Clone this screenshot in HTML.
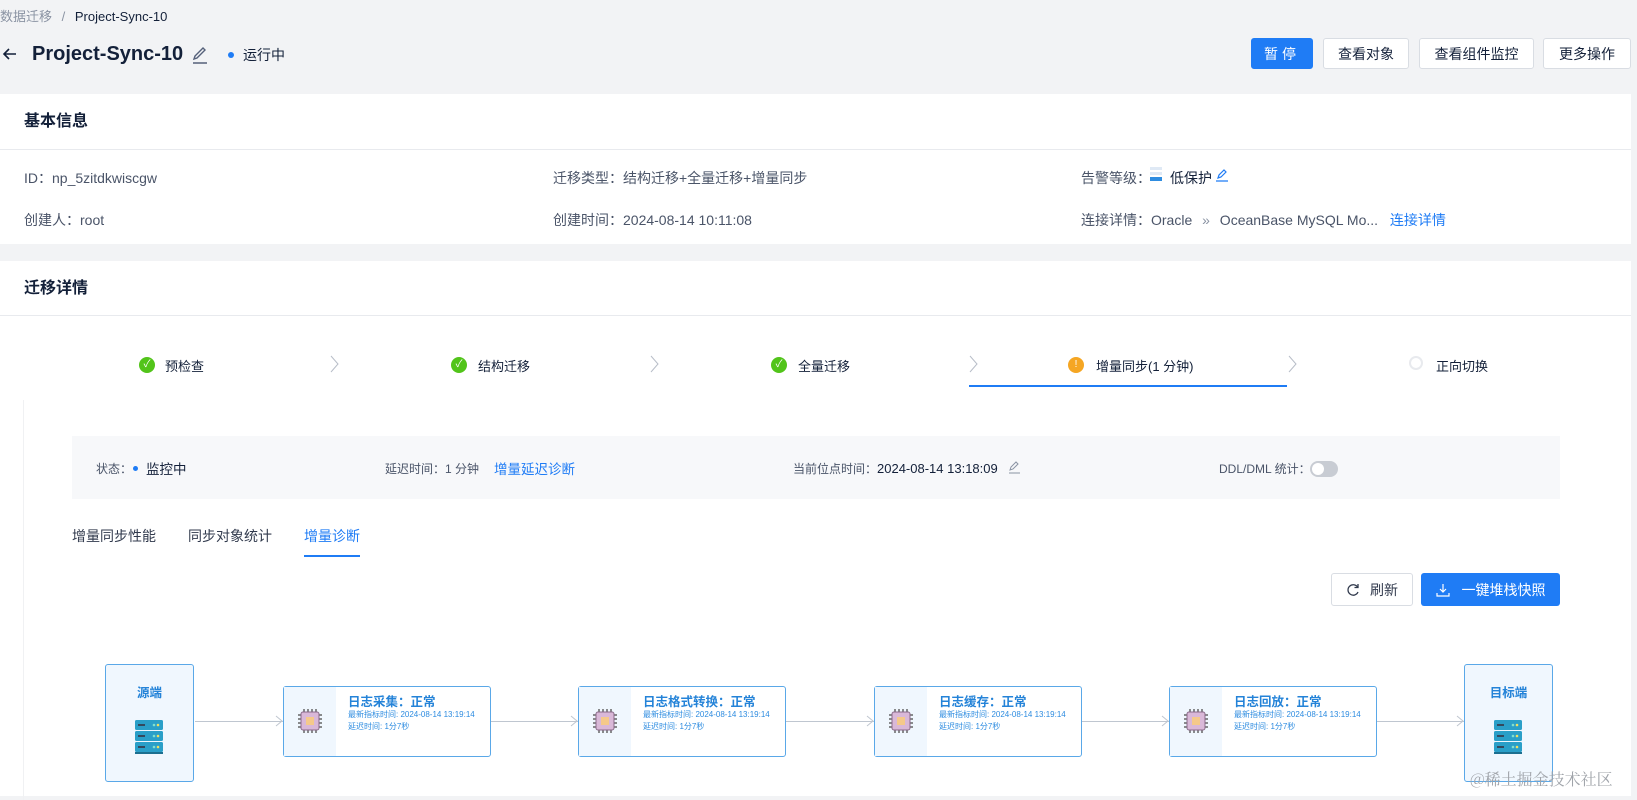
<!DOCTYPE html>
<html><head><meta charset="utf-8">
<style>
*{box-sizing:border-box;margin:0;padding:0}
body{width:1637px;height:796px;overflow:hidden;background:#f2f3f5;font-family:"Liberation Sans","Noto Sans CJK SC",sans-serif;color:#132039;position:relative;font-size:14px}
.a{position:absolute;white-space:nowrap}
.card{position:absolute;left:0;width:1631px;background:#fff}
.btn{position:absolute;top:38px;height:31px;border:1px solid #d9dde3;background:#fff;border-radius:3px;font-size:14px;display:flex;align-items:center;justify-content:center;color:#132039}
.chev{position:absolute;top:355px;width:10px;height:18px}
.ok{position:absolute;top:357px;width:16px;height:16px;border-radius:50%;background:#52c41a;color:#fff;font-size:10px;text-align:center;line-height:16px}
.stage{position:absolute;top:686px;height:71px;border:1.5px solid #5aa8e8;border-radius:3px;background:#fff}
.stage .ic{position:absolute;left:0;top:0;bottom:0;width:52px;background:#f0f7fe}
.stage .t{position:absolute;left:64px;top:4px;font-size:12.5px;font-weight:bold;color:#2483d8}
.stage .s{position:absolute;left:64px;font-size:8px;color:#2e8ce0}
.box{position:absolute;top:664px;width:89px;height:118px;border:1.5px solid #5aa8e8;border-radius:3px;background:#f0f7fe}
.box .t{position:absolute;top:17px;left:0;right:0;text-align:center;font-size:12.5px;font-weight:bold;color:#2483d8}
.line{position:absolute;top:721px;height:1px;background:#bfc6d0}
</style></head><body>
<div class="a" style="left:0;top:6px;font-size:13px;color:#8a93a3">数据迁移 <span style="margin:0 6px">/</span> <span style="color:#132039">Project-Sync-10</span></div>
<svg class="a" style="left:2px;top:46px" width="16" height="16" viewBox="0 0 16 16"><path d="M14 8H2M7 3L2 8l5 5" stroke="#132039" stroke-width="1.6" fill="none"/></svg>
<div class="a" style="left:32px;top:43px;font-size:20px;font-weight:bold">Project-Sync-10</div>
<svg class="a" style="left:190px;top:45px" width="20" height="20" viewBox="0 0 20 20"><path d="M4 14l1-3 8-8 2 2-8 8z M3 18h14" stroke="#55607a" stroke-width="1.4" fill="none"/></svg>
<div class="a" style="left:228px;top:52px;width:6px;height:6px;border-radius:50%;background:#1f7cf5"></div>
<div class="a" style="left:243px;top:45px;font-size:14px">运行中</div>
<div class="btn" style="left:1251px;width:62px;background:#1f7cf5;border-color:#1f7cf5;color:#fff;letter-spacing:4px">暂停</div>
<div class="btn" style="left:1323px;width:86px">查看对象</div>
<div class="btn" style="left:1419px;width:115px">查看组件监控</div>
<div class="btn" style="left:1543px;width:88px">更多操作</div>

<div class="card" style="top:94px;height:150px">
 <div class="a" style="left:24px;top:13px;font-size:16px;font-weight:bold">基本信息</div>
 <div class="a" style="left:0;right:0;top:55px;height:1px;background:#e8eaee"></div>
 <div class="a" style="left:24px;top:74px;color:#4a5468">ID：np_5zitdkwiscgw</div>
 <div class="a" style="left:24px;top:116px;color:#4a5468">创建人：root</div>
 <div class="a" style="left:553px;top:74px;color:#4a5468">迁移类型：结构迁移+全量迁移+增量同步</div>
 <div class="a" style="left:553px;top:116px;color:#4a5468">创建时间：2024-08-14 10:11:08</div>
 <div class="a" style="left:1081px;top:74px;color:#4a5468">告警等级：</div>
 <div class="a" style="left:1150px;top:73px;width:12px;height:3px;background:#dfe9f5"></div>
 <div class="a" style="left:1150px;top:78px;width:12px;height:3px;background:#dfe9f5"></div>
 <div class="a" style="left:1150px;top:83px;width:12px;height:4px;background:#2e8ce0"></div>
 <div class="a" style="left:1170px;top:74px;color:#132039">低保护</div>
 <svg class="a" style="left:1215px;top:74px" width="14" height="14" viewBox="0 0 14 14"><path d="M3 10l1-3 5-5 2 2-5 5z M1 13h12" stroke="#1f7cf5" stroke-width="1.2" fill="none"/></svg>
 <div class="a" style="left:1081px;top:116px;color:#4a5468">连接详情：Oracle <span style="color:#8a93a3;margin:0 6px">»</span> OceanBase MySQL Mo... <span style="color:#1f7cf5;margin-left:8px">连接详情</span></div>
</div>

<div class="card" style="top:261px;height:535px">
 <div class="a" style="left:24px;top:13px;font-size:16px;font-weight:bold">迁移详情</div>
 <div class="a" style="left:0;right:0;top:54px;height:1px;background:#e8eaee"></div>
 <div class="a" style="left:23px;top:139px;width:1px;height:400px;background:#f0f1f3"></div>
</div>

<div class="ok" style="left:139px">✓</div><div class="a" style="left:165px;top:356px;font-size:13px">预检查</div>
<div class="ok" style="left:451px">✓</div><div class="a" style="left:478px;top:356px;font-size:13px">结构迁移</div>
<div class="ok" style="left:771px">✓</div><div class="a" style="left:798px;top:356px;font-size:13px">全量迁移</div>
<div class="ok" style="left:1068px;background:#f5a623">!</div><div class="a" style="left:1096px;top:356px;font-size:13px">增量同步(1 分钟)</div>
<div class="a" style="left:1409px;top:356px;width:14px;height:14px;border-radius:50%;border:2px solid #e8eaee"></div><div class="a" style="left:1436px;top:356px;font-size:13px">正向切换</div>
<svg class="chev" style="left:330px" viewBox="0 0 10 18"><path d="M1 1l7 8-7 8" stroke="#b8bec8" fill="none"/></svg>
<svg class="chev" style="left:650px" viewBox="0 0 10 18"><path d="M1 1l7 8-7 8" stroke="#b8bec8" fill="none"/></svg>
<svg class="chev" style="left:969px" viewBox="0 0 10 18"><path d="M1 1l7 8-7 8" stroke="#b8bec8" fill="none"/></svg>
<svg class="chev" style="left:1288px" viewBox="0 0 10 18"><path d="M1 1l7 8-7 8" stroke="#b8bec8" fill="none"/></svg>
<div class="a" style="left:969px;top:385px;width:318px;height:2px;background:#1f7cf5"></div>

<div class="a" style="left:72px;top:436px;width:1488px;height:63px;background:#f7f8fa"></div>
<div class="a" style="left:96px;top:460px;font-size:12px;color:#4a5468">状态：</div>
<div class="a" style="left:133px;top:466px;width:5px;height:5px;border-radius:50%;background:#1f7cf5"></div>
<div class="a" style="left:146px;top:458px;font-size:13.5px">监控中</div>
<div class="a" style="left:385px;top:460px;font-size:12px;color:#4a5468">延迟时间：1 分钟</div>
<div class="a" style="left:494px;top:458px;font-size:13.5px;color:#1f7cf5">增量延迟诊断</div>
<div class="a" style="left:793px;top:460px;font-size:12px;color:#4a5468">当前位点时间：<span style="font-size:13px;color:#132039">2024-08-14 13:18:09</span></div>
<svg class="a" style="left:1008px;top:460px" width="13" height="14" viewBox="0 0 13 14"><path d="M2 10l1-3 5-5 2 2-5 5z M1 13h11" stroke="#8a93a3" fill="none"/></svg>
<div class="a" style="left:1219px;top:460px;font-size:12px;color:#4a5468">DDL/DML 统计：</div>
<div class="a" style="left:1310px;top:461px;width:28px;height:16px;border-radius:8px;background:#c8ccd3"><div style="position:absolute;left:2px;top:2px;width:12px;height:12px;border-radius:50%;background:#fff"></div></div>

<div class="a" style="left:72px;top:526px;font-size:14px;color:#313a4d">增量同步性能</div>
<div class="a" style="left:188px;top:526px;font-size:14px;color:#313a4d">同步对象统计</div>
<div class="a" style="left:304px;top:526px;font-size:14px;color:#1f7cf5">增量诊断</div>
<div class="a" style="left:304px;top:555px;width:56px;height:2px;background:#1f7cf5"></div>

<div class="a" style="left:1331px;top:573px;width:82px;height:33px;border:1px solid #d9dde3;border-radius:3px;background:#fff;font-size:14px;display:flex;align-items:center;justify-content:center;color:#313a4d"><svg width="14" height="14" viewBox="0 0 14 14" style="margin-right:10px"><path d="M11.5 4A5.2 5.2 0 1 0 12 9" stroke="#313a4d" stroke-width="1.3" fill="none"/><path d="M12 1v3.5H8.5" stroke="#313a4d" stroke-width="1.3" fill="none"/></svg>刷新</div>
<div class="a" style="left:1421px;top:573px;width:139px;height:33px;border-radius:3px;background:#1f7cf5;font-size:14px;display:flex;align-items:center;justify-content:center;color:#fff"><svg width="14" height="14" viewBox="0 0 14 14" style="margin-right:12px"><path d="M7 1v8M4 6l3 3 3-3M1 10v3h12v-3" stroke="#fff" stroke-width="1.2" fill="none"/></svg>一键堆栈快照</div>

<div class="line" style="left:195px;width:88px"></div>
<div class="line" style="left:491px;width:87px"></div>
<div class="line" style="left:786px;width:88px"></div>
<div class="line" style="left:1082px;width:87px"></div>
<div class="line" style="left:1377px;width:87px"></div>

<svg width="0" height="0" style="position:absolute"><defs>
<g id="srv"><rect x="0" y="0" width="28" height="10" rx="1.5" fill="#2a9fc8"/><rect x="0" y="11" width="28" height="10" rx="1.5" fill="#2a9fc8"/><rect x="0" y="22" width="28" height="10" rx="1.5" fill="#2a9fc8"/>
<rect x="3" y="4" width="7" height="2" fill="#34495e"/><rect x="3" y="15" width="7" height="2" fill="#34495e"/><rect x="3" y="26" width="7" height="2" fill="#34495e"/>
<circle cx="19" cy="5" r="1.3" fill="#7fe0d0"/><circle cx="23" cy="5" r="1.3" fill="#f0e060"/><circle cx="19" cy="16" r="1.3" fill="#7fe0d0"/><circle cx="23" cy="16" r="1.3" fill="#f0e060"/><circle cx="19" cy="27" r="1.3" fill="#7fe0d0"/><circle cx="23" cy="27" r="1.3" fill="#f0e060"/><rect x="0" y="32" width="28" height="2" fill="#1c6f90"/></g>
<g id="chip"><g stroke="#666" stroke-width="1.5"><path d="M6 0v4M10 0v4M14 0v4M18 0v4M6 20v4M10 20v4M14 20v4M18 20v4M0 6h4M0 10h4M0 14h4M0 18h4M20 6h4M20 10h4M20 14h4M20 18h4"/></g><rect x="3" y="3" width="18" height="18" rx="2" fill="#d9b8d8" stroke="#8a6a8a"/><rect x="8" y="8" width="8" height="8" fill="#f5c98a"/></g>
</defs></svg>

<div class="box" style="left:105px"><div class="t">源端</div><svg style="position:absolute;left:29px;top:55px" width="30" height="36"><use href="#srv"/></svg></div>
<div class="box" style="left:1464px"><div class="t">目标端</div><svg style="position:absolute;left:29px;top:55px" width="30" height="36"><use href="#srv"/></svg></div>

<div class="stage" style="left:283px;width:208px"><div class="ic"><svg style="position:absolute;left:14px;top:22px" width="24" height="24"><use href="#chip"/></svg></div><div class="t">日志采集：正常</div><div class="s" style="top:22px">最新指标时间: 2024-08-14 13:19:14</div><div class="s" style="top:34px">延迟时间: 1分7秒</div></div>
<div class="stage" style="left:578px;width:208px"><div class="ic"><svg style="position:absolute;left:14px;top:22px" width="24" height="24"><use href="#chip"/></svg></div><div class="t">日志格式转换：正常</div><div class="s" style="top:22px">最新指标时间: 2024-08-14 13:19:14</div><div class="s" style="top:34px">延迟时间: 1分7秒</div></div>
<div class="stage" style="left:874px;width:208px"><div class="ic"><svg style="position:absolute;left:14px;top:22px" width="24" height="24"><use href="#chip"/></svg></div><div class="t">日志缓存：正常</div><div class="s" style="top:22px">最新指标时间: 2024-08-14 13:19:14</div><div class="s" style="top:34px">延迟时间: 1分7秒</div></div>
<div class="stage" style="left:1169px;width:208px"><div class="ic"><svg style="position:absolute;left:14px;top:22px" width="24" height="24"><use href="#chip"/></svg></div><div class="t">日志回放：正常</div><div class="s" style="top:22px">最新指标时间: 2024-08-14 13:19:14</div><div class="s" style="top:34px">延迟时间: 1分7秒</div></div>

<svg class="a" style="left:275px;top:715px" width="8" height="12"><path d="M1 1l6 5-6 5" stroke="#bfc6d0" fill="none"/></svg>
<svg class="a" style="left:570px;top:715px" width="8" height="12"><path d="M1 1l6 5-6 5" stroke="#bfc6d0" fill="none"/></svg>
<svg class="a" style="left:866px;top:715px" width="8" height="12"><path d="M1 1l6 5-6 5" stroke="#bfc6d0" fill="none"/></svg>
<svg class="a" style="left:1161px;top:715px" width="8" height="12"><path d="M1 1l6 5-6 5" stroke="#bfc6d0" fill="none"/></svg>
<svg class="a" style="left:1456px;top:715px" width="8" height="12"><path d="M1 1l6 5-6 5" stroke="#bfc6d0" fill="none"/></svg>

<div class="a" style="left:1470px;top:767px;font-size:16px;color:#a0a4aa;font-family:'Noto Serif CJK SC','Liberation Serif',serif">@稀土掘金技术社区</div>
</body></html>
